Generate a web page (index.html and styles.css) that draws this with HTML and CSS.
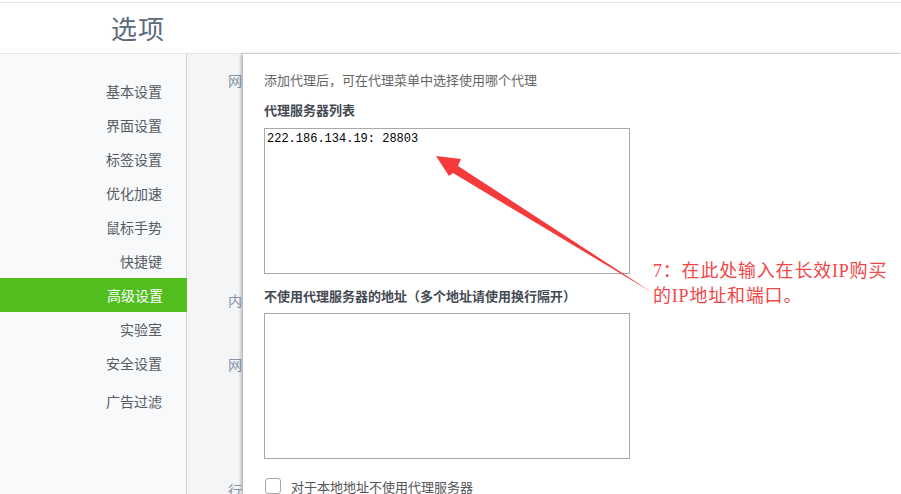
FILE: index.html
```html
<!DOCTYPE html>
<html lang="zh-CN">
<head>
    <meta charset="UTF-8">
    <title>选项</title>
    <link rel="stylesheet" href="styles.css">
</head>
<body>
    <div class="topline"></div>
    <div class="header">
        <h1>选项</h1>
    </div>

    <div class="main">
        <ul class="sidebar">
            <li>基本设置</li>
            <li>界面设置</li>
            <li>标签设置</li>
            <li>优化加速</li>
            <li>鼠标手势</li>
            <li>快捷键</li>
            <li class="active">高级设置</li>
            <li>实验室</li>
            <li>安全设置</li>
            <li class="last">广告过滤</li>
        </ul>

        <div class="page-peek">
            <p class="peek-1">网络</p>
            <p class="peek-2">内核</p>
            <p class="peek-3">网页</p>
            <p class="peek-4">行为</p>
        </div>

        <div class="dialog">
            <p class="hint">添加代理后，可在代理菜单中选择使用哪个代理</p>

            <h3>代理服务器列表</h3>
            <textarea class="proxy-list">222.186.134.19: 28803</textarea>

            <h3 class="second">不使用代理服务器的地址（多个地址请使用换行隔开）</h3>
            <textarea class="bypass-list"></textarea>

            <label class="check-row">
                <span class="checkbox"></span>
                对于本地地址不使用代理服务器
            </label>
        </div>
    </div>

    <!-- annotation over the screenshot -->
    <svg class="arrow" width="901" height="494" viewBox="0 0 901 494">
        <polygon points="436,156 461,159 458,166 653,293 453,173 449,176" fill="#f43a3a"/>
    </svg>
    <div class="note">7：在此处输入在长效IP购买<br>的IP地址和端口。</div>
</body>
</html>
```

FILE: styles.css
```css
* {
    margin: 0;
    padding: 0;
    box-sizing: border-box;
}

body {
    font-family: 'Noto Sans CJK SC', sans-serif;
    background: white;
    width: 901px;
    height: 494px;
    overflow: hidden;
    position: relative;
}

.topline {
    height: 3px;
    border-bottom: 1px solid #e3e3e3;
}

.header {
    height: 51px;
    border-bottom: 1px solid #e6e6e6;
    padding-left: 111px;
}

.header h1 {
    font-size: 26px;
    font-weight: normal;
    color: #5b6b7b;
    line-height: 50px;
    letter-spacing: 1px;
}

.main {
    display: flex;
    height: 440px;
}

.sidebar {
    list-style: none;
    width: 187px;
    flex-shrink: 0;
    background: #f8f9fa;
    border-right: 1px solid #cfd1d3;
    padding-top: 20px;
}

.sidebar li {
    height: 34px;
    line-height: 34px;
    text-align: right;
    padding-right: 24px;
    font-size: 14px;
    color: #555c64;
}

.sidebar li.active {
    background: #52bd1e;
    color: white;
    margin-right: -1px;
}

.sidebar li.last {
    margin-top: 4px;
}

.page-peek {
    width: 56px;
    flex-shrink: 0;
    background: #f4f5f7;
    overflow: hidden;
    white-space: nowrap;
    padding-left: 41px;
    font-size: 14px;
    color: #8294a8;
}

.page-peek p {
    line-height: 20px;
}

.peek-1 { margin-top: 16px; }
.peek-2 { margin-top: 200px; }
.peek-3 { margin-top: 44px; }
.peek-4 { margin-top: 106px; }

.dialog {
    flex: 1;
    background: white;
    box-shadow: -2px 0 3px rgba(0, 0, 0, 0.28);
    padding: 17px 0 0 21px;
}

.hint {
    font-size: 13px;
    line-height: 18px;
    color: #666;
}

.dialog h3 {
    font-size: 13px;
    line-height: 18px;
    font-weight: bold;
    color: #444a52;
    margin-top: 12px;
    margin-bottom: 9px;
}

.dialog h3.second {
    margin-top: 13px;
    margin-bottom: 8px;
}

textarea {
    display: block;
    width: 366px;
    height: 146px;
    border: 1px solid #a9a9a9;
    resize: none;
    padding: 3px 2px;
    font-family: 'Liberation Mono', monospace;
    font-size: 12px;
    line-height: 14px;
    color: #000;
    outline: none;
}

.check-row {
    display: flex;
    align-items: center;
    gap: 10px;
    margin-top: 19px;
    font-size: 13px;
    color: #555;
    height: 16px;
}

.checkbox {
    width: 16px;
    height: 16px;
    border: 1px solid #a9a9a9;
    border-radius: 3px;
    margin-left: 1px;
    background: white;
}

.arrow {
    position: absolute;
    left: 0;
    top: 0;
}

.note {
    position: absolute;
    left: 653px;
    top: 259px;
    font-family: 'Liberation Serif', 'Noto Sans CJK SC', serif;
    font-size: 18px;
    line-height: 25px;
    letter-spacing: 0.8px;
    color: #f04848;
}
```
